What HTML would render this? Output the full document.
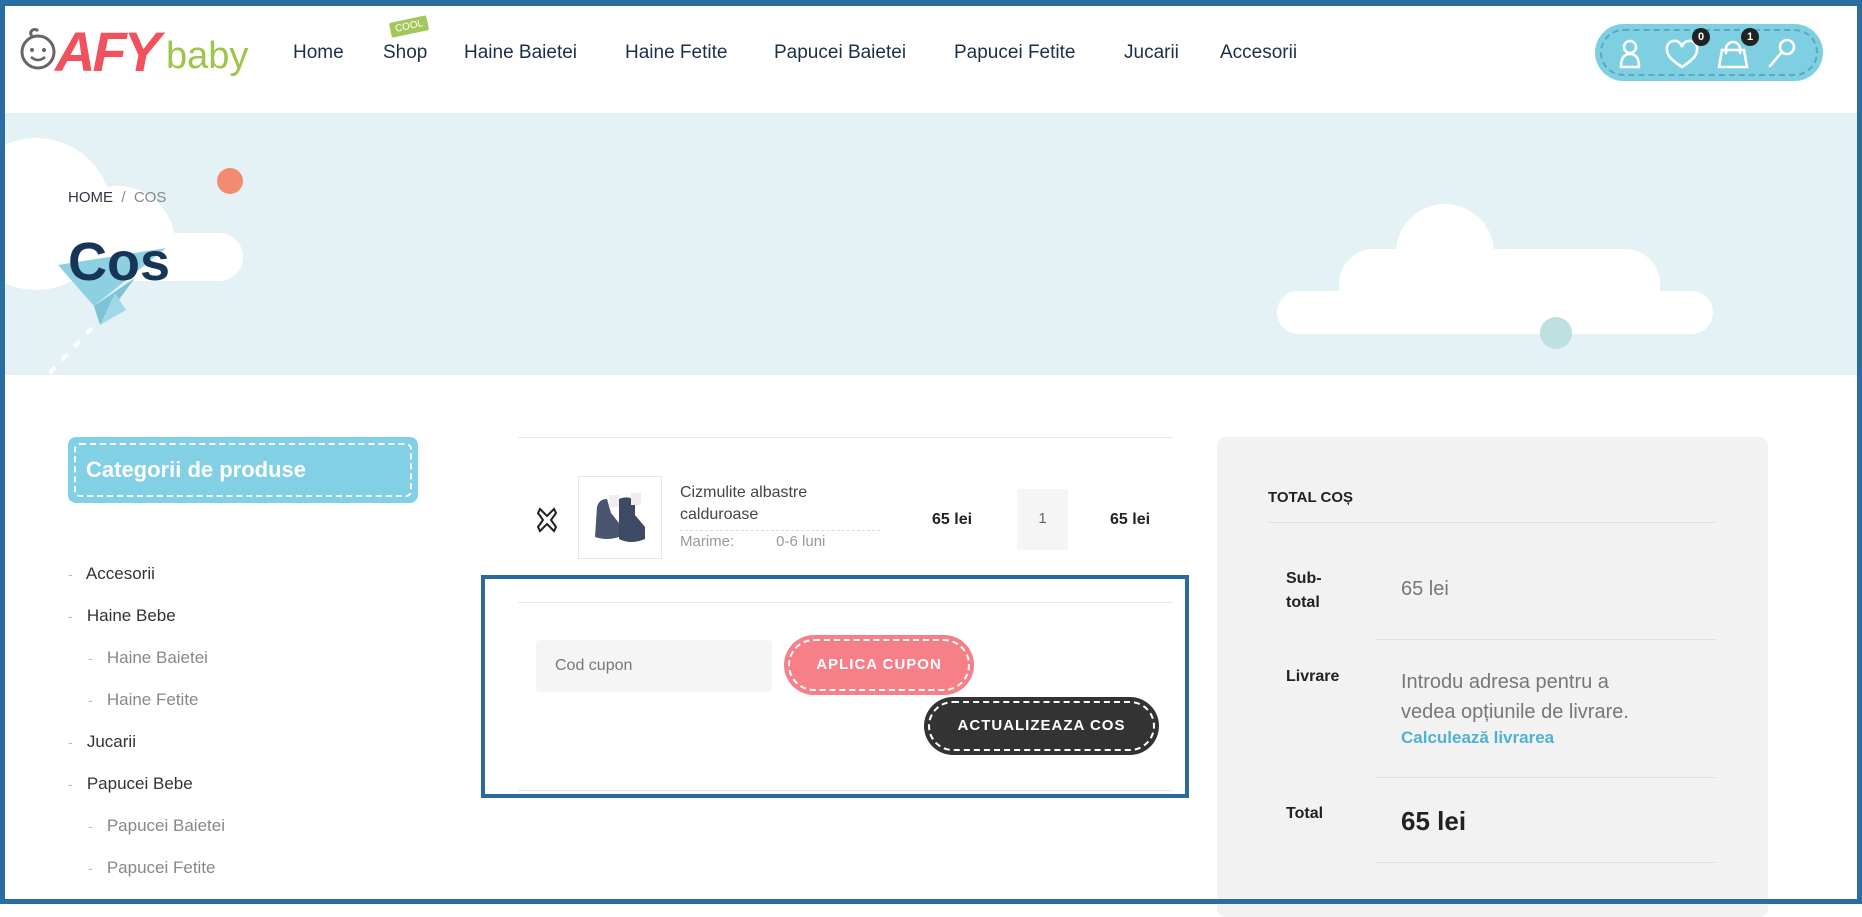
<!DOCTYPE html>
<html><head><meta charset="utf-8"><style>
*{margin:0;padding:0;box-sizing:border-box}
body{width:1862px;height:904px;overflow:hidden;background:#fff;font-family:"Liberation Sans",sans-serif;position:relative;color:#222}
.a{position:absolute}
.frame{position:absolute;left:0;top:0;width:1862px;height:904px;border:5px solid #2a6da0;border-top-width:6px;z-index:50;pointer-events:none}
.nav{font-size:19px;color:#1c2f4a;top:42px;white-space:nowrap}
.cat{font-size:17px;color:#333;white-space:nowrap}
.cat.s{color:#888}
.dash{color:#bbb;font-size:14px}
.line{height:1px;background:#e6e6e6}
</style></head><body>
<div class="frame"></div>

<svg class="a" style="left:18px;top:26px" width="40" height="48" viewBox="0 0 40 48"><circle cx="20" cy="26" r="16" fill="none" stroke="#666" stroke-width="3"/><path d="M14 10c-4-4 2-9 6-5" fill="none" stroke="#666" stroke-width="3"/><circle cx="14" cy="24" r="2" fill="#666"/><circle cx="26" cy="24" r="2" fill="#666"/><path d="M13 31q7 6 14 0" fill="none" stroke="#666" stroke-width="2.5"/></svg>
<div class="a" style="left:55px;top:22px;font-size:56px;font-weight:bold;font-style:italic;color:#f1515c;letter-spacing:-3px;line-height:60px">AFY</div>
<div class="a" style="left:166px;top:34px;font-size:38px;color:#9dc54a;line-height:44px">baby</div>

<div class="a nav" style="left:293px">Home</div>
<div class="a" style="left:390px;top:19px;background:#a5c75a;color:#fff;font-size:10px;padding:2px 5px;transform:rotate(-12deg);border-radius:2px">COOL</div>
<div class="a nav" style="left:383px">Shop</div>
<div class="a nav" style="left:464px">Haine Baietei</div>
<div class="a nav" style="left:625px">Haine Fetite</div>
<div class="a nav" style="left:774px">Papucei Baietei</div>
<div class="a nav" style="left:954px">Papucei Fetite</div>
<div class="a nav" style="left:1124px">Jucarii</div>
<div class="a nav" style="left:1220px">Accesorii</div>

<div class="a" style="left:1595px;top:24px;width:228px;height:57px;border-radius:29px;background:#7fcfe3"></div>
<div class="a" style="left:1600px;top:29px;width:218px;height:47px;border-radius:24px;border:2px dashed #5aa7bf"></div>
<svg class="a" style="left:1615px;top:36px" width="200" height="36" viewBox="0 0 200 36" fill="none" stroke="#fff" stroke-width="2.6" stroke-linecap="round">
<circle cx="15" cy="11" r="6"/><path d="M6 31q0-13 9-13t9 13z"/>
<path d="M67 31c-12-8-15-12-15-17a6 6 0 0 1 15-3 6 6 0 0 1 15 3c0 5-3 9-15 17z"/>
<path d="M104 31l3-17h22l3 17z"/><path d="M111 17v-4a7 7 0 0 1 14 0v4"/>
<circle cx="172" cy="11" r="7"/><path d="M167 16l-12 14"/>
</svg>
<div class="a" style="left:1692px;top:28px;width:18px;height:18px;border-radius:9px;background:#222;color:#fff;font-size:11px;text-align:center;line-height:18px;font-weight:bold">0</div>
<div class="a" style="left:1741px;top:28px;width:18px;height:18px;border-radius:9px;background:#222;color:#fff;font-size:11px;text-align:center;line-height:18px;font-weight:bold">1</div>

<div class="a" style="left:0;top:113px;width:1862px;height:262px;background:#e4f2f6;overflow:hidden">
  <div class="a" style="left:-40px;top:25px;width:152px;height:152px;border-radius:50%;background:#fff"></div>
  <div class="a" style="left:60px;top:73px;width:115px;height:95px;border-radius:58px 58px 0 0;background:#fff"></div>
  <div class="a" style="left:-10px;top:120px;width:253px;height:48px;border-radius:0 24px 24px 0;background:#fff"></div>
  <svg class="a" style="left:30px;top:135px" width="150" height="140" viewBox="0 0 150 140"><path d="M28 17L136 0L64 58z" fill="#8dd0e2"/><path d="M64 58L70 77L105 30z" fill="#7ec3d5"/><path d="M70 77L96 62L85 45z" fill="#9fd9e8"/><path d="M62 80L10 135" stroke="#fff" stroke-width="4" stroke-dasharray="8 10"/></svg>
  <div class="a" style="left:217px;top:55px;width:26px;height:26px;border-radius:50%;background:#f28b6f"></div>
  <div class="a" style="left:68px;top:76px;font-size:15px;color:#334"><span>HOME</span><span style="color:#888"> &nbsp;/ &nbsp;COS</span></div>
  <div class="a" style="left:68px;top:118px;font-size:54px;font-weight:bold;color:#173558">Cos</div>
  <div class="a" style="left:1396px;top:91px;width:98px;height:98px;border-radius:50%;background:#fff"></div>
  <div class="a" style="left:1339px;top:136px;width:70px;height:70px;border-radius:50%;background:#fff"></div>
  <div class="a" style="left:1370px;top:136px;width:290px;height:70px;border-radius:0 35px 0 0;background:#fff"></div>
  <div class="a" style="left:1277px;top:178px;width:436px;height:43px;border-radius:22px;background:#fff"></div>
  <div class="a" style="left:1540px;top:204px;width:32px;height:32px;border-radius:50%;background:#bfe0e0"></div>
</div>

<div class="a" style="left:68px;top:437px;width:350px;height:66px;border-radius:8px;background:#82d0e6"></div>
<div class="a" style="left:74px;top:443px;width:338px;height:54px;border-radius:6px;border:2px dashed #fff"></div>
<div class="a" style="left:86px;top:457px;font-size:22px;font-weight:bold;color:#fff">Categorii de produse</div>
<div class="a" style="left:68px;top:553px;line-height:42px">
<div class="cat"><span class="dash">-</span>&nbsp;&nbsp; Accesorii</div>
<div class="cat"><span class="dash">-</span>&nbsp;&nbsp; Haine Bebe</div>
<div class="cat s" style="padding-left:20px"><span class="dash">-</span>&nbsp;&nbsp; Haine Baietei</div>
<div class="cat s" style="padding-left:20px"><span class="dash">-</span>&nbsp;&nbsp; Haine Fetite</div>
<div class="cat"><span class="dash">-</span>&nbsp;&nbsp; Jucarii</div>
<div class="cat"><span class="dash">-</span>&nbsp;&nbsp; Papucei Bebe</div>
<div class="cat s" style="padding-left:20px"><span class="dash">-</span>&nbsp;&nbsp; Papucei Baietei</div>
<div class="cat s" style="padding-left:20px"><span class="dash">-</span>&nbsp;&nbsp; Papucei Fetite</div>
</div>

<div class="a line" style="left:518px;top:437px;width:655px"></div>
<svg class="a" style="left:536px;top:507px" width="22" height="26" viewBox="0 0 22 26" fill="none" stroke="#222" stroke-width="2"><path d="M4 2l7 7 7-7 2 4-5 7 5 7-2 4-7-7-7 7-2-4 5-7-5-7z"/></svg>
<div class="a" style="left:578px;top:476px;width:84px;height:83px;border:1px solid #e6e6e6;background:#fff">
<svg width="82" height="81" viewBox="0 0 82 81"><path d="M18 30q2-8 10-8l4 14 8 10v14q-12 4-24 0z" fill="#4a5570"/><path d="M40 22q10-4 16 2v14l10 12v12q-14 6-26 0z" fill="#3e4a64"/><rect x="30" y="18" width="10" height="12" fill="#eee"/><rect x="52" y="16" width="10" height="12" fill="#eee"/></svg></div>
<div class="a" style="left:680px;top:482px;font-size:16px;color:#444;line-height:22px">Cizmulite albastre<br>calduroase</div>
<div class="a" style="left:680px;top:530px;width:200px;border-top:1px dashed #ddd"></div>
<div class="a" style="left:680px;top:533px;font-size:15px;color:#999">Marime:<span style="margin-left:42px">0-6 luni</span></div>
<div class="a" style="left:932px;top:511px;font-size:16px;font-weight:bold;color:#222">65 lei</div>
<div class="a" style="left:1017px;top:489px;width:51px;height:61px;background:#f5f5f5;border-radius:3px;text-align:center;line-height:60px;font-size:15px;color:#666">1</div>
<div class="a" style="left:1110px;top:511px;font-size:16px;font-weight:bold;color:#222">65 lei</div>

<div class="a" style="left:481px;top:575px;width:708px;height:223px;border:4px solid #2a6a9b"></div>
<div class="a line" style="left:518px;top:602px;width:655px"></div>
<div class="a" style="left:536px;top:640px;width:236px;height:52px;background:#f5f5f5;border-radius:4px;font-size:16px;color:#777;line-height:52px;padding-left:19px">Cod cupon</div>
<div class="a" style="left:784px;top:635px;width:190px;height:60px;border-radius:30px;background:#f77f87"></div>
<div class="a" style="left:788px;top:639px;width:182px;height:52px;border-radius:26px;border:2px dashed #fff;color:#fff;font-size:15px;font-weight:bold;letter-spacing:1px;text-align:center;line-height:48px">APLICA CUPON</div>
<div class="a" style="left:924px;top:697px;width:235px;height:58px;border-radius:29px;background:#333"></div>
<div class="a" style="left:928px;top:701px;width:227px;height:50px;border-radius:25px;border:2px dashed #fff;color:#fff;font-size:15px;font-weight:bold;letter-spacing:1px;text-align:center;line-height:46px">ACTUALIZEAZA COS</div>
<div class="a line" style="left:518px;top:790px;width:655px"></div>

<div class="a" style="left:1217px;top:437px;width:551px;height:480px;background:#f2f2f2;border-radius:8px"></div>
<div class="a" style="left:1268px;top:489px;font-size:15px;font-weight:bold;color:#222">TOTAL COȘ</div>
<div class="a" style="left:1268px;top:522px;width:448px;height:1px;background:#e2e2e2"></div>
<div class="a" style="left:1286px;top:567px;font-size:16px;font-weight:bold;color:#222;line-height:24px">Sub-<br>total</div>
<div class="a" style="left:1401px;top:578px;font-size:20px;color:#777">65 lei</div>
<div class="a" style="left:1376px;top:639px;width:340px;height:1px;background:#e2e2e2"></div>
<div class="a" style="left:1286px;top:668px;font-size:16px;font-weight:bold;color:#222">Livrare</div>
<div class="a" style="left:1401px;top:667px;font-size:20px;color:#777;line-height:30px">Introdu adresa pentru a<br>vedea opțiunile de livrare.</div>
<div class="a" style="left:1401px;top:728px;font-size:17px;font-weight:bold;color:#4fb3d0">Calculează livrarea</div>
<div class="a" style="left:1376px;top:777px;width:340px;height:1px;background:#e2e2e2"></div>
<div class="a" style="left:1286px;top:805px;font-size:16px;font-weight:bold;color:#222">Total</div>
<div class="a" style="left:1401px;top:806px;font-size:26px;font-weight:bold;color:#222">65 lei</div>
<div class="a" style="left:1376px;top:862px;width:340px;height:1px;background:#e2e2e2"></div>
</body></html>
